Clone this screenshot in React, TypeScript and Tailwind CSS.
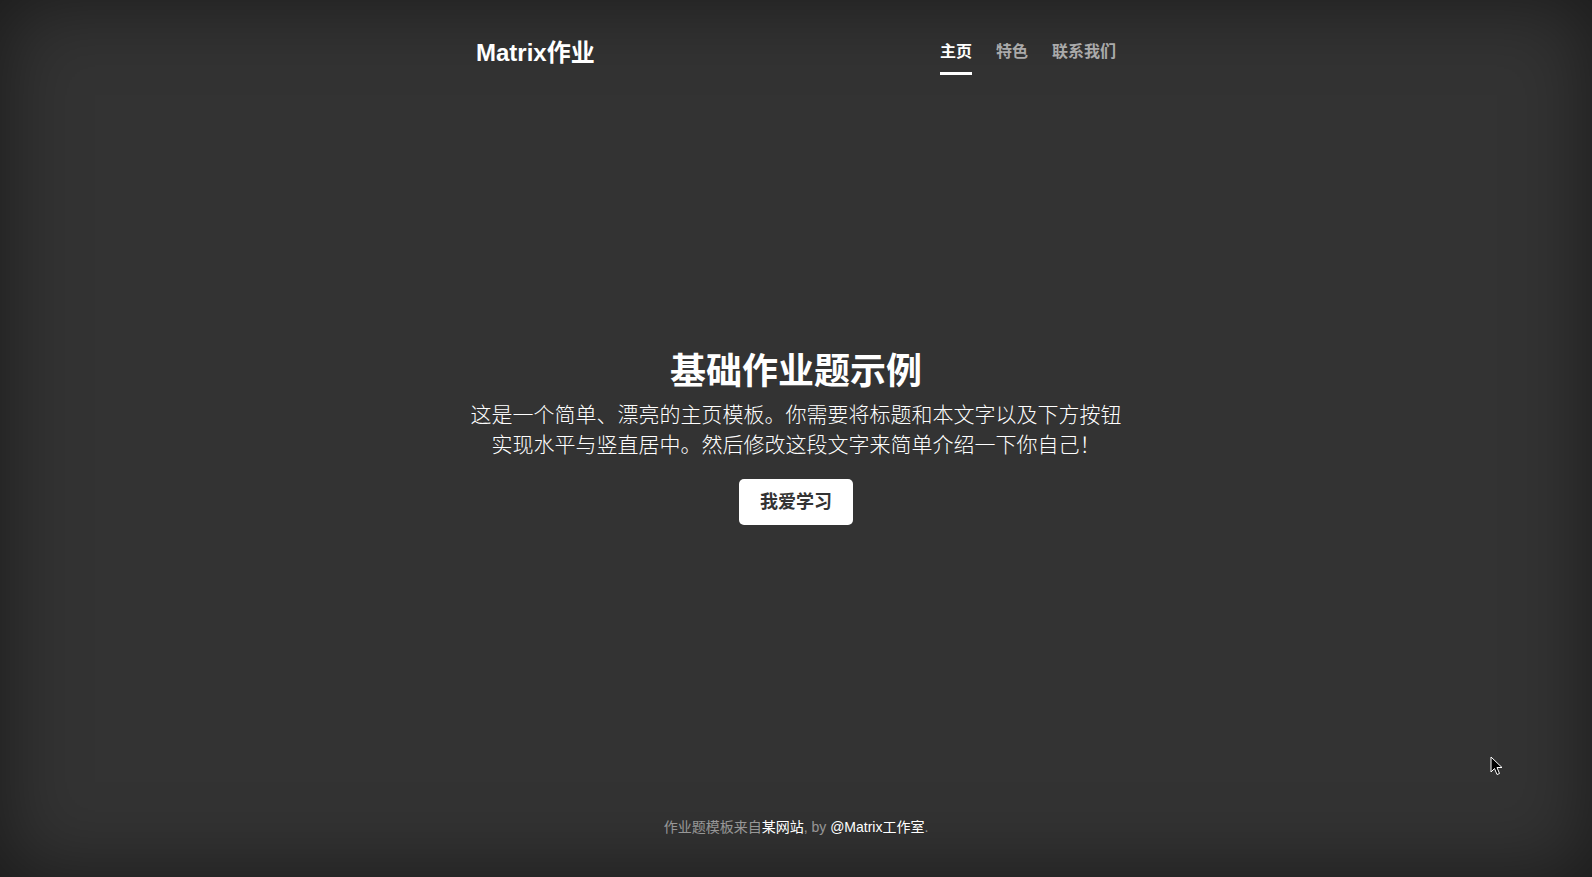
export default function App() {
  const navItems = [
    { label: "主页", active: true },
    { label: "特色", active: false },
    { label: "联系我们", active: false },
  ]

  return (
    <div className="relative h-screen flex flex-col bg-[#333] text-white shadow-[inset_0_0_5rem_rgba(0,0,0,0.5)] font-['Liberation_Sans','Noto_Sans_CJK_SC',sans-serif] overflow-hidden">
      {/* Header */}
      <header className="w-[672px] mx-auto px-4 pt-[39px] flex justify-between items-start">
        <h3 className="text-[24px] leading-[28px] font-bold">Matrix作业</h3>
        <nav className="pt-px flex gap-6">
          {navItems.map((item) => (
            <a
              key={item.label}
              href="#"
              className={`text-base leading-6 font-bold pb-2 border-b-[3px] ${
                item.active ? "text-white border-white" : "text-white/60 border-transparent"
              }`}
            >
              {item.label}
            </a>
          ))}
        </nav>
      </header>

      {/* Cover */}
      <main className="flex-1 flex flex-col items-center justify-center pb-[18px] text-center">
        <h1 className="text-[36px] leading-[44px] font-bold">基础作业题示例</h1>
        <p className="mt-[6px] max-w-[660px] text-[21px] leading-[30px] font-light">
          这是一个简单、漂亮的主页模板。你需要将标题和本文字以及下方按钮实现水平与竖直居中。然后修改这段文字来简单介绍一下你自己！
        </p>
        <a
          href="#"
          className="mt-[19px] bg-white text-[#333] rounded-[5px] px-[21px] py-[9px] text-[18px] leading-[28px] font-bold"
        >
          我爱学习
        </a>
      </main>

      {/* Footer */}
      <footer className="pb-[40px] text-center text-[14px] leading-5 text-white/50">
        <p>
          作业题模板来自<a href="#" className="text-white">某网站</a>, by{" "}
          <a href="#" className="text-white">@Matrix工作室</a>.
        </p>
      </footer>

      {/* Mouse cursor */}
      <svg className="absolute left-[1490px] top-[756px]" width="13" height="20" viewBox="0 0 13 20">
        <path d="M1 1 L1 16 L4.5 12.5 L7 18.5 L9.5 17.5 L7 11.5 L12 11.5 Z" fill="#000" stroke="#fff" strokeWidth="1" strokeLinejoin="round" />
      </svg>
    </div>
  )
}
